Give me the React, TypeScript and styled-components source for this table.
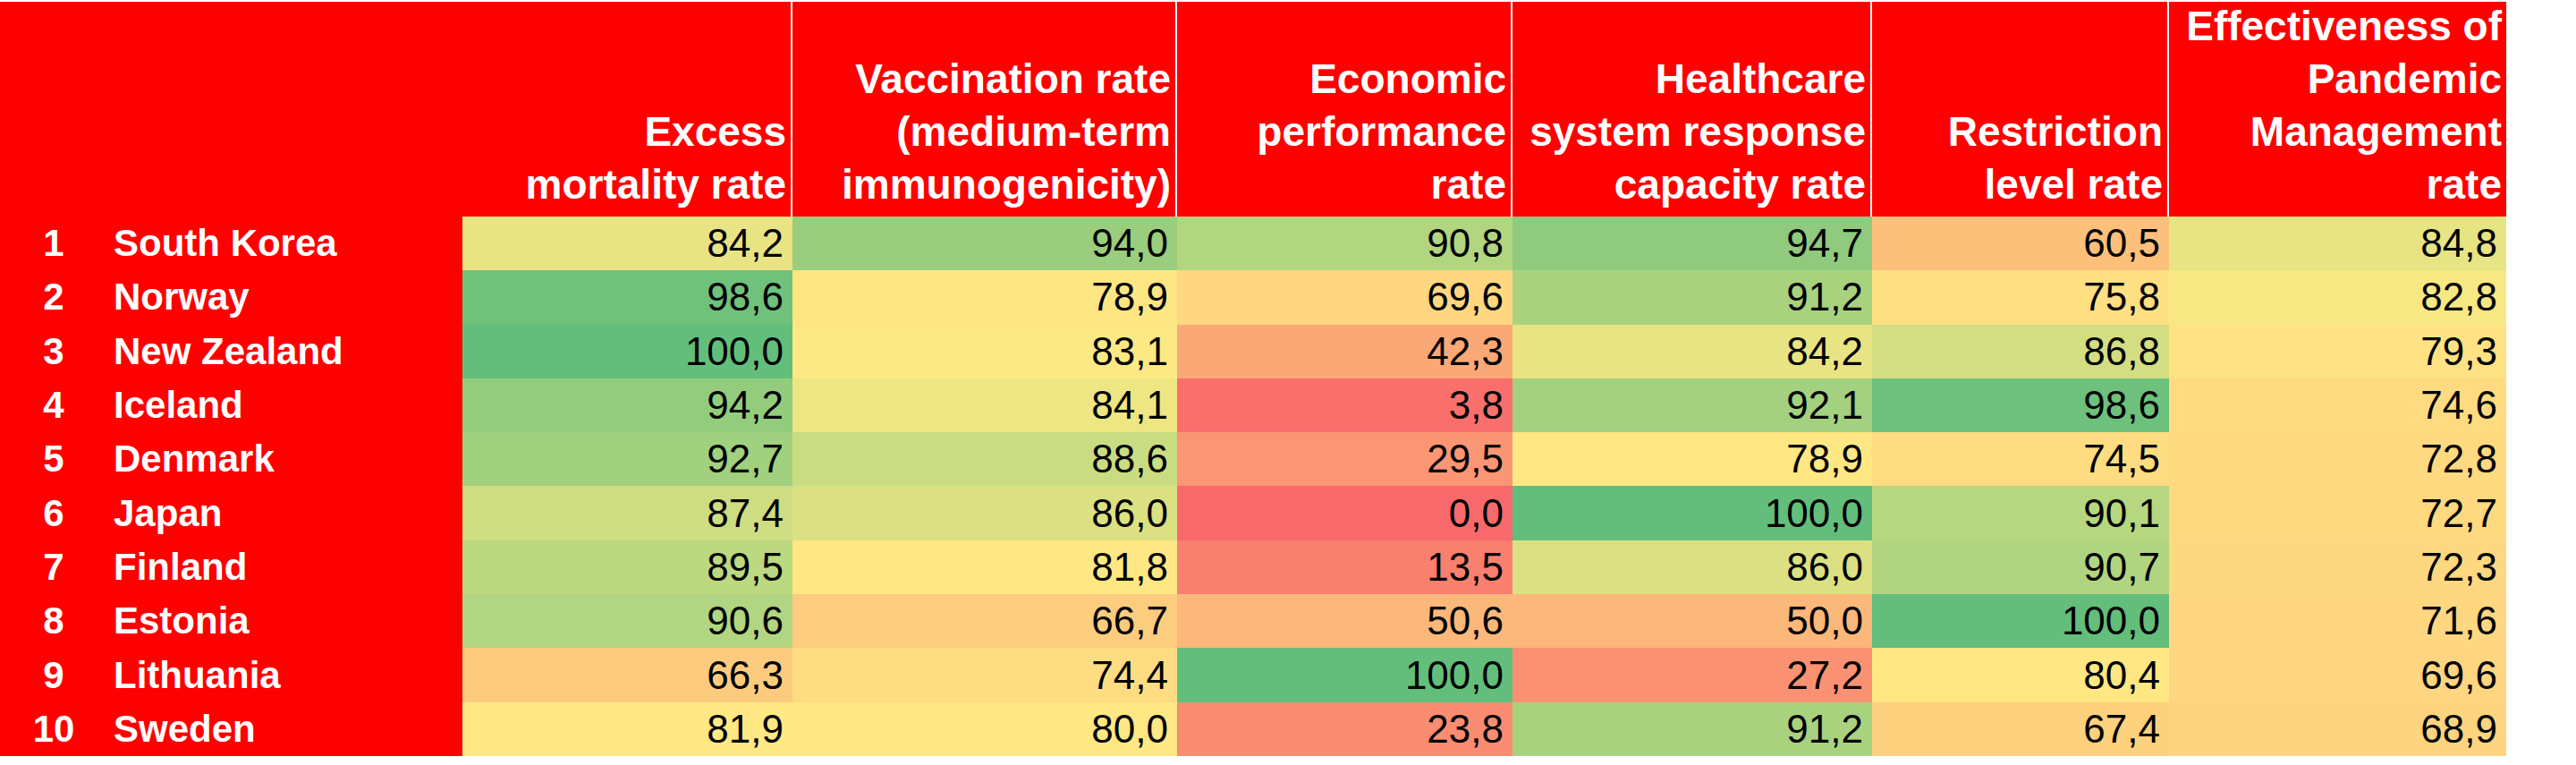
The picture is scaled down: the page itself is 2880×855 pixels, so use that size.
import React from 'react';
import styled, { createGlobalStyle } from 'styled-components';

const GlobalStyle = createGlobalStyle`
  html, body {
    margin: 0;
    padding: 0;
    background: #ffffff;
  }
  body {
    font-family: "Liberation Sans", Arial, sans-serif;
  }
`;

const Page = styled.div`
  padding-top: 2px;
  width: 2880px;
  height: 853px;
  overflow: hidden;
`;

const Sheet = styled.div`
  display: grid;
  grid-template-columns: 517px 369px 430px 375px 402px 332px 377px;
  grid-template-rows: 240px;
  grid-auto-rows: 60.3px;
  width: 2802px;
`;

const Corner = styled.div`
  background: #ff0000;
`;

const HeadCell = styled.div<{ $divider?: boolean }>`
  box-sizing: border-box;
  display: flex;
  flex-direction: column;
  justify-content: flex-end;
  align-items: flex-end;
  padding: 0 5px 6px 0;
  background: #ff0000;
  border-right: ${({ $divider }) => ($divider ? '2px solid #ffffff' : 'none')};
  color: #ffffff;
  font-size: 46px;
  font-weight: 700;
  line-height: 59px;
  text-align: right;
  white-space: nowrap;
`;

const LabelCell = styled.div`
  display: flex;
  align-items: center;
  background: #ff0000;
  color: #ffffff;
  font-size: 42px;
  font-weight: 700;
  line-height: 60px;
  white-space: nowrap;
`;

const Rank = styled.span`
  width: 120px;
  text-align: center;
`;

const Country = styled.span`
  margin-left: 7px;
`;

const DataCell = styled.div<{ $bg: string }>`
  display: flex;
  align-items: center;
  justify-content: flex-end;
  padding-right: 10px;
  background: ${({ $bg }) => $bg};
  color: #000000;
  font-size: 44px;
  line-height: 60px;
`;

const headers: string[][] = [
  ['Excess', 'mortality rate'],
  ['Vaccination rate', '(medium-term', 'immunogenicity)'],
  ['Economic', 'performance', 'rate'],
  ['Healthcare', 'system response', 'capacity rate'],
  ['Restriction', 'level rate'],
  ['Effectiveness of', 'Pandemic', 'Management', 'rate'],
];

interface Row {
  rank: number;
  name: string;
  values: string[];
  colors: string[];
}

const rows: Row[] = [
  {
    rank: 1,
    name: 'South Korea',
    values: ['84,2', '94,0', '90,8', '94,7', '60,5', '84,8'],
    colors: ['#E8E483', '#9ACE7E', '#B2D580', '#8FCA7E', '#FDC07B', '#E6E483'],
  },
  {
    rank: 2,
    name: 'Norway',
    values: ['98,6', '78,9', '69,6', '91,2', '75,8', '82,8'],
    colors: ['#6FC17C', '#FEE683', '#FED780', '#A9D27F', '#FEDF82', '#F7E883'],
  },
  {
    rank: 3,
    name: 'New Zealand',
    values: ['100,0', '83,1', '42,3', '84,2', '86,8', '79,3'],
    colors: ['#63BE7B', '#FDE984', '#FBA877', '#E8E483', '#D3DE82', '#FEE283'],
  },
  {
    rank: 4,
    name: 'Iceland',
    values: ['94,2', '84,1', '3,8', '92,1', '98,6', '74,6'],
    colors: ['#94CC7E', '#EDE683', '#F86F6C', '#A3D17F', '#6DC17C', '#FEDB81'],
  },
  {
    rank: 5,
    name: 'Denmark',
    values: ['92,7', '88,6', '29,5', '78,9', '74,5', '72,8'],
    colors: ['#A1D07F', '#C9DC81', '#FA9673', '#FFE784', '#FEDC81', '#FED980'],
  },
  {
    rank: 6,
    name: 'Japan',
    values: ['87,4', '86,0', '0,0', '100,0', '90,1', '72,7'],
    colors: ['#CEDD82', '#DBE182', '#F8696B', '#63BE7B', '#B6D680', '#FED980'],
  },
  {
    rank: 7,
    name: 'Finland',
    values: ['89,5', '81,8', '13,5', '86,0', '90,7', '72,3'],
    colors: ['#BCD880', '#FFE884', '#F97F6F', '#DBE182', '#B0D480', '#FED880'],
  },
  {
    rank: 8,
    name: 'Estonia',
    values: ['90,6', '66,7', '50,6', '50,0', '100,0', '71,6'],
    colors: ['#B1D580', '#FDCC7E', '#FCB87A', '#FCB77A', '#63BE7B', '#FED780'],
  },
  {
    rank: 9,
    name: 'Lithuania',
    values: ['66,3', '74,4', '100,0', '27,2', '80,4', '69,6'],
    colors: ['#FCCB7D', '#FEDC81', '#63BE7B', '#FA9172', '#FFE784', '#FED580'],
  },
  {
    rank: 10,
    name: 'Sweden',
    values: ['81,9', '80,0', '23,8', '91,2', '67,4', '68,9'],
    colors: ['#FEE984', '#FFE784', '#F98C71', '#A9D27F', '#FDD17E', '#FDD47F'],
  },
];

export default function App() {
  return (
    <Page>
      <GlobalStyle />
      <Sheet>
        <Corner />
        {headers.map((lines, i) => (
          <HeadCell key={i} $divider={i < headers.length - 1}>
            {lines.map((line) => (
              <span key={line}>{line}</span>
            ))}
          </HeadCell>
        ))}
        {rows.map((row) => (
          <React.Fragment key={row.rank}>
            <LabelCell>
              <Rank>{row.rank}</Rank>
              <Country>{row.name}</Country>
            </LabelCell>
            {row.values.map((v, i) => (
              <DataCell key={i} $bg={row.colors[i]}>
                {v}
              </DataCell>
            ))}
          </React.Fragment>
        ))}
      </Sheet>
    </Page>
  );
}
